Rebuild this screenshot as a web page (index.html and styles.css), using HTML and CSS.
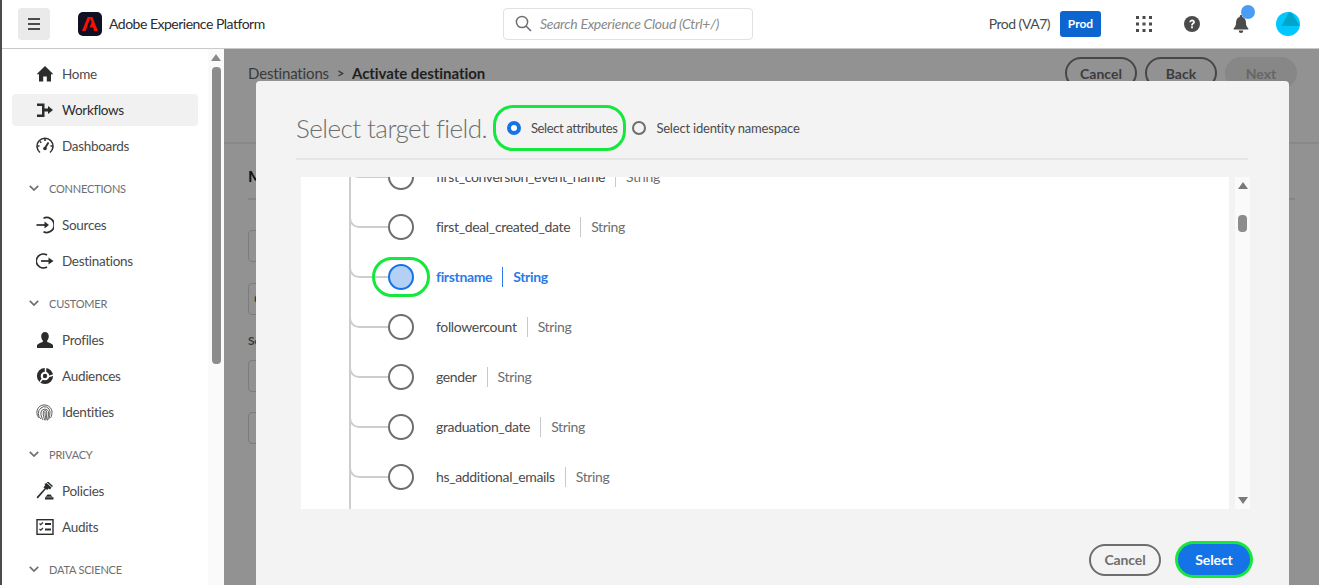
FILE: index.html
```html
<!DOCTYPE html>
<html lang="en">
<head>
<meta charset="utf-8">
<title>Adobe Experience Platform</title>
<link rel="stylesheet" href="styles.css">
</head>
<body>
<div class="app">
  <header class="topbar">
    <button class="menu-btn" aria-label="Menu">
      <svg width="14" height="12" viewBox="0 0 14 12"><path d="M1 1h12M1 6h12M1 11h12" stroke="#4b4b4b" stroke-width="1.8" fill="none"/></svg>
    </button>
    <span class="logo">
      <svg width="16" height="14" viewBox="0 0 16 14"><path fill="#fa0f00" d="M5.6 0h4.8L16 14h-3.7L11 10.4H7.6L9.7 5.2 8 1.6 3.6 14H0z"/></svg>
    </span>
    <span class="brand">Adobe Experience Platform</span>
    <div class="search">
      <svg width="17" height="17" viewBox="0 0 17 17"><circle cx="7" cy="7" r="5.6" fill="none" stroke="#6e6e6e" stroke-width="1.5"/><path d="M11 11l5 5" stroke="#6e6e6e" stroke-width="1.6"/></svg>
      <span>Search Experience Cloud (Ctrl+/)</span>
    </div>
    <div class="top-right">
      <span class="org">Prod (VA7)</span>
      <span class="badge">Prod</span>
      <svg class="grid-ico" width="16" height="16" viewBox="0 0 16 16" fill="#4b4b4b"><path d="M0 0h3v3H0zM6.5 0h3v3h-3zM13 0h3v3h-3zM0 6.5h3v3H0zM6.5 6.5h3v3h-3zM13 6.5h3v3h-3zM0 13h3v3H0zM6.5 13h3v3h-3zM13 13h3v3h-3z"/></svg>
      <svg class="help-ico" width="16" height="16" viewBox="0 0 16 16"><circle cx="8" cy="8" r="8" fill="#4b4b4b"/><path d="M5.400 6.200C5.500 4.700 6.600 3.600 8.100 3.600c1.500 0 2.800.9 2.800 2.400 0 1.200-.8 1.800-1.400 2.200-.5.300-.6.700-.6 1.200H7.100c0-1 .3-1.700 1-2.200.5-.3.9-.6.9-1.100 0-.5-.4-.8-1-.8-.6 0-1 .4-1.100 1z" fill="#fff"/><rect x="7.100" y="10.300" width="1.800" height="2" fill="#fff"/></svg>
      <span class="bell">
        <svg width="16" height="18" viewBox="0 0 16 18" fill="#4b4b4b"><path d="M8 0a1.3 1.3 0 0 1 1.3 1.3v.6C12 2.600 13 5 13 8c0 2.500.8 4 2.300 5.300V14.500H.7V13.300C2.200 12 3 10.500 3 8c0-3 1-5.400 3.700-6.100v-.6A1.300 1.300 0 0 1 8 0zM5.800 15.500h4.400A2.200 2.200 0 0 1 8 18a2.200 2.200 0 0 1-2.200-2.500z"/></svg>
        <i class="bell-dot"></i>
      </span>
      <svg class="avatar" width="24" height="24" viewBox="0 0 24 24"><circle cx="12" cy="12" r="12" fill="#00c8ff"/><path d="M15.500 .5 23.800 14H5.500L13 .3z" fill="#00a5c8"/></svg>
    </div>
  </header>

  <div class="body">
    <aside class="sidebar">
      <nav class="nav">
        <a class="item"><svg class="ico" viewBox="0 0 18 18"><path fill="#2c2c2c" d="M9 1 .6 9.200h2.400V16.500h4.200v-5h3.600v5H15V9.200h2.400z"/></svg>Home</a>
        <a class="item active"><svg class="ico" viewBox="0 0 18 18"><path fill="#2c2c2c" d="M1 2.500h7.500v5H12V5l5 4-5 4v-2.500H8.500V16H1v-2.500h5V5H1z"/></svg>Workflows</a>
        <a class="item"><svg class="ico" viewBox="0 0 18 18"><g fill="none" stroke="#2c2c2c" stroke-width="1.500"><path d="M4 15.500A8 8 0 1 1 14 15.500"/><path d="M9 11 12.500 5.500" stroke-width="1.800"/><path d="M9 2v2M3.500 9h-2M16.500 9h-2M4 4.500l1.300 1.300"/></g><circle cx="9" cy="11.500" r="1.800" fill="#2c2c2c"/></svg>Dashboards</a>

        <h3 class="section"><svg class="chev" viewBox="0 0 10 6"><path d="M.8.800 5 5l4.200-4.200" fill="none" stroke="#6e6e6e" stroke-width="1.700"/></svg>CONNECTIONS</h3>
        <a class="item"><svg class="ico" viewBox="0 0 18 18"><g fill="none" stroke="#2c2c2c" stroke-width="1.700"><path d="M7.500 2.200A7.500 7.500 0 1 1 7.500 15.800"/><path d="M.5 9h9"/></g><path d="M8.500 5.500 13 9l-4.500 3.500z" fill="#2c2c2c"/></svg>Sources</a>
        <a class="item"><svg class="ico" viewBox="0 0 18 18"><g fill="none" stroke="#2c2c2c" stroke-width="1.700"><path d="M11 3A7 7 0 1 0 11 15"/><path d="M5 9h8"/></g><path d="M12.500 5.500 17.500 9l-5 3.500z" fill="#2c2c2c"/></svg>Destinations</a>

        <h3 class="section"><svg class="chev" viewBox="0 0 10 6"><path d="M.8.800 5 5l4.200-4.200" fill="none" stroke="#6e6e6e" stroke-width="1.700"/></svg>CUSTOMER</h3>
        <a class="item"><svg class="ico" viewBox="0 0 18 18"><path fill="#2c2c2c" d="M9 1c2.300 0 3.800 1.700 3.800 4.200 0 1.800-.8 3.300-1.600 4.200v1.500c2 .7 5 1.800 5.800 3.100V17H1v-3c.8-1.300 3.800-2.400 5.800-3.100V9.400C6 8.500 5.200 7 5.200 5.200 5.200 2.700 6.700 1 9 1z"/></svg>Profiles</a>
        <a class="item"><svg class="ico" viewBox="0 0 18 18"><circle cx="9" cy="9" r="6.200" fill="none" stroke="#2c2c2c" stroke-width="3.800"/><path d="M9.500 0v5.500M12.500 9.500 18 8M4 15l2.800-3.500" stroke="#fff" stroke-width="1.500"/><circle cx="9" cy="9" r="2.200" fill="#2c2c2c"/></svg>Audiences</a>
        <a class="item"><svg class="ico" viewBox="0 0 18 18"><g fill="none" stroke="#4b4b4b" stroke-width=".9"><path d="M3 15A8 8 0 0 1 3.500 3.500 8 8 0 0 1 16 8c0 3-.3 5-1.500 7"/><path d="M5 16A7 7 0 0 1 5 5a5.500 5.500 0 0 1 9 3.500c0 3-.5 5.500-1.300 8"/><path d="M7 17c-1.500-3-2.500-5-2-8a4 4 0 0 1 7.500-.5c.2 3-.3 6-1.200 9"/><path d="M9 17.500C7.800 14.500 7 12 7.300 9a1.800 1.800 0 0 1 3.500 0c0 3-.3 5-1 8"/><path d="M9 8.800c0 3 .3 5 1 7.500"/></g></svg>Identities</a>

        <h3 class="section"><svg class="chev" viewBox="0 0 10 6"><path d="M.8.800 5 5l4.200-4.200" fill="none" stroke="#6e6e6e" stroke-width="1.700"/></svg>PRIVACY</h3>
        <a class="item"><svg class="ico" viewBox="0 0 18 18"><path fill="#2c2c2c" d="M10.500 0l1-1 5.500 5-1 1zM8.500 2l2-1 5 4.500-1.500 2-1.300-1-1.500 1.500-1.200-1.100L1.800 16.500.5 15.200 8.700 6.300 7.500 5.200 9.200 3.600zM9 15.200h8.500V17.500H9zM11.500 12.500h3l2 2.200h-7z"/></svg>Policies</a>
        <a class="item"><svg class="ico" viewBox="0 0 18 18"><rect x="1" y="1.700" width="16" height="14.600" fill="none" stroke="#2c2c2c" stroke-width="1.400"/><path d="M3.500 5.500l1.200 1.200L7 4.500M3.500 11l1.200 1.200L7 10" fill="none" stroke="#2c2c2c" stroke-width="1.200"/><path d="M9 6h6M9 11.500h6" stroke="#2c2c2c" stroke-width="1.800"/></svg>Audits</a>

        <h3 class="section"><svg class="chev" viewBox="0 0 10 6"><path d="M.8.800 5 5l4.200-4.200" fill="none" stroke="#6e6e6e" stroke-width="1.700"/></svg>DATA SCIENCE</h3>
      </nav>
      <div class="side-scroll">
        <svg class="sb-up" width="10" height="7" viewBox="0 0 10 7"><path d="M5 0l5 7H0z" fill="#8a8a8a"/></svg>
        <div class="sb-thumb"></div>
      </div>
    </aside>

    <main class="main">
      <div class="page">
        <div class="page-head">
          <div class="crumbs"><span>Destinations</span><b class="sep">&gt;</b><strong>Activate destination</strong></div>
          <div class="page-actions">
            <span class="pg-btn">Cancel</span>
            <span class="pg-btn">Back</span>
            <span class="pg-btn off">Next</span>
          </div>
        </div>
        <div class="page-body">
          <h2 class="pg-title">Mapping</h2>
          <div class="pg-field"></div>
          <div class="pg-field second"><span>Cancel</span></div>
          <div class="pg-label">Source field</div>
          <div class="pg-field"></div>
          <div class="pg-field third"></div>
        </div>
      </div>

      <section class="modal">
        <div class="modal-head">
          <h1 class="modal-title">Select target field.</h1>
          <div class="radios">
            <label class="radio on"><i class="dot"></i>Select attributes</label>
            <label class="radio"><i class="dot"></i>Select identity namespace</label>
          </div>
        </div>
        <div class="picker">
          <div class="tree-panel">
            <ul class="tree">
              <li class="row"><i class="elbow"></i><i class="node"></i><span class="name">first_conversion_event_name</span><span class="type">String</span></li>
              <li class="row"><i class="elbow"></i><i class="node"></i><span class="name">first_deal_created_date</span><span class="type">String</span></li>
              <li class="row sel"><i class="elbow"></i><i class="node"></i><span class="name">firstname</span><span class="type">String</span></li>
              <li class="row"><i class="elbow"></i><i class="node"></i><span class="name">followercount</span><span class="type">String</span></li>
              <li class="row"><i class="elbow"></i><i class="node"></i><span class="name">gender</span><span class="type">String</span></li>
              <li class="row"><i class="elbow"></i><i class="node"></i><span class="name">graduation_date</span><span class="type">String</span></li>
              <li class="row"><i class="elbow"></i><i class="node"></i><span class="name">hs_additional_emails</span><span class="type">String</span></li>
            </ul>
          </div>
          <div class="tree-scroll">
            <svg width="10" height="7" viewBox="0 0 10 7"><path d="M5 0l5 7H0z" fill="#7a7a7a"/></svg>
            <div class="ts-thumb"></div>
            <svg class="ts-down" width="10" height="7" viewBox="0 0 10 7"><path d="M5 7 0 0h10z" fill="#7a7a7a"/></svg>
          </div>
        </div>
        <div class="modal-foot">
          <button class="btn ghost">Cancel</button>
          <button class="btn cta">Select</button>
        </div>
      </section>
    </main>
  </div>
</div>
</body>
</html>
```
FILE: styles.css
```css
* { box-sizing: border-box; }
html, body { margin: 0; height: 100%; overflow: hidden; }
body { font-family: "Lato", "Open Sans", sans-serif; font-size: 14px; color: #2c2c2c; background: #fff; }
h1, h2, h3, ul { margin: 0; padding: 0; }
ul { list-style: none; }
i { display: block; font-style: normal; }
button { font-family: inherit; }

.app { height: 585px; display: flex; flex-direction: column; border-left: 2px solid #4b4b4b; }

/* top bar */
.topbar { height: 49px; flex: none; display: flex; align-items: center; padding: 0 19px 1px 16px; border-bottom: 1px solid #c9c9c9; background: #fff; }
.menu-btn { width: 32px; height: 32px; border: 0; border-radius: 4px; background: #eaeaea; display: flex; align-items: center; justify-content: center; padding: 0; }
.logo { width: 24px; height: 24px; margin-left: 28px; border-radius: 5px; background: #101025; display: flex; align-items: center; justify-content: center; }
.brand { margin-left: 7px; font-size: 14px; letter-spacing: -.5px; color: #2c2c2c; white-space: nowrap; width: 394px; }
.search { width: 250px; height: 32px; border: 1px solid #e1e1e1; border-radius: 4px; display: flex; align-items: center; gap: 8px; padding-left: 11px; font-style: italic; font-size: 14px; letter-spacing: -.3px; color: #8a8a8a; white-space: nowrap; }
.top-right { margin-left: auto; display: flex; align-items: center; }
.org { font-size: 14px; letter-spacing: -.5px; color: #4b4b4b; white-space: nowrap; }
.badge { margin-left: 10px; width: 41px; height: 26px; border-radius: 3px; background: #0d66d0; color: #fff; font-size: 12px; font-weight: 700; display: flex; align-items: center; justify-content: center; }
.grid-ico { margin-left: 35px; }
.help-ico { margin-left: 32px; }
.bell { margin-left: 33px; width: 16px; height: 18px; position: relative; display: block; }
.bell svg { display: block; }
.bell-dot { position: absolute; top: -10px; left: 8px; width: 14px; height: 14px; border-radius: 50%; background: #4b9cf5; }
.avatar { margin-left: 27px; }

.body { flex: 1; min-height: 0; display: flex; }

/* sidebar */
.sidebar { width: 222px; flex: none; display: flex; background: #fff; overflow: hidden; }
.nav { flex: 1; padding: 7px 10px 0; display: flex; flex-direction: column; }
.item { height: 32px; flex: none; margin: 2px 0; padding-left: 24px; border-radius: 4px; display: flex; align-items: center; gap: 8px; font-size: 13.500px; letter-spacing: -.3px; color: #4b4b4b; white-space: nowrap; }
.item.active { background: #f1f1f1; color: #2c2c2c; }
.ico { width: 18px; height: 18px; flex: none; }
.section { height: 36px; flex: none; margin-top: 7px; padding: 0 0 2px 17px; display: flex; align-items: center; gap: 10px; font-size: 11px; font-weight: 400; letter-spacing: -.2px; color: #6e6e6e; white-space: nowrap; }
.chev { width: 10px; height: 6px; flex: none; }
.side-scroll { width: 16px; flex: none; background: #fafafa; display: flex; flex-direction: column; align-items: center; padding-top: 5px; }
.sb-thumb { width: 9px; height: 297px; margin-top: 6px; border-radius: 4px; background: #8c8c8c; }

/* main (dimmed page under the dialog) */
.main { flex: 1; min-width: 0; position: relative; overflow: hidden; background: #929292; }
.page { height: 100%; }
.page-head { height: 95px; padding: 8px 22px 0 24px; border-bottom: 2px solid #888; display: flex; justify-content: space-between; align-items: flex-start; }
.crumbs { display: flex; align-items: center; height: 32px; font-size: 15px; color: #3a3a3a; white-space: nowrap; }
.crumbs span { letter-spacing: -.15px; }
.crumbs .sep { font-size: 13px; font-weight: 700; margin: 0 7px 0 8px; width: 8px; }
.crumbs strong { color: #1f1f1f; font-weight: 700; letter-spacing: -.05px; }
.page-actions { display: flex; gap: 8px; }
.pg-btn { width: 72px; height: 32px; border: 2px solid #464646; border-radius: 16px; display: flex; align-items: center; justify-content: center; font-size: 14px; font-weight: 700; color: #3c3c3c; }
.pg-btn.off { border-color: #878787; background: #878787; color: #666; }
.page-body { padding: 18px 24px 0; }
.pg-title { font-size: 16px; font-weight: 700; color: #141414; height: 38px; padding-top: 4px; border-bottom: 2px solid #858585; }
.pg-field { width: 300px; height: 32px; margin-top: 30px; border: 1px solid #7c7c7c; border-radius: 4px; }
.pg-field.second { margin-top: 21px; padding-left: 5px; color: #333; line-height: 30px; }
.pg-label { margin-top: 18px; height: 16px; font-size: 12px; font-weight: 700; color: #3a3a3a; }
.pg-label + .pg-field { margin-top: 11px; }
.pg-field.third { margin-top: 20px; }

/* dialog */
.modal { position: absolute; left: 32px; top: 32px; width: 1033px; height: 560px; border-radius: 4px 4px 0 0; background: #f3f3f3; padding: 0 41px 0 40px; display: flex; flex-direction: column; }
.modal-head { height: 79px; flex: none; display: flex; align-items: center; border-bottom: 2px solid #e5e5e5; padding-top: 16px; }
.modal-title { font-size: 26px; font-weight: 300; color: #6e6e6e; white-space: nowrap; letter-spacing: -.55px; }
.radios { display: flex; align-items: center; margin-left: 20px; }
.radio { display: flex; align-items: center; gap: 10px; font-size: 13px; letter-spacing: -.4px; color: #4b4b4b; white-space: nowrap; position: relative; }
.radio + .radio { margin-left: 15px; letter-spacing: -.2px; }
.dot { width: 14px; height: 14px; margin-top: 1px; border: 2px solid #6e6e6e; border-radius: 50%; background: #f3f3f3; flex: none; }
.radio.on .dot { border: 4.500px solid #1473e6; background: #fff; }
.radio.on::after { content: ""; position: absolute; left: -14px; right: -9px; top: -14px; bottom: -14px; height: 40px; margin: auto 0; border: 3px solid #14e83c; border-radius: 20px; }

.picker { flex: none; margin: 17px 0 0 5px; height: 332px; display: flex; align-items: stretch; }
.tree-panel { width: 928px; flex: none; background: #fff; overflow: hidden; padding-left: 48px; }
.tree { margin-top: -25px; border-left: 2px solid #cdcdcd; height: 357px; }
.row { height: 50px; display: flex; align-items: center; font-size: 14px; letter-spacing: -.35px; color: #4b4b4b; white-space: nowrap; }
.elbow { width: 39px; height: 26px; align-self: flex-start; border-left: 2px solid #cdcdcd; border-bottom: 2px solid #cdcdcd; border-bottom-left-radius: 10px; margin-left: -2px; flex: none; }
.node { width: 26px; height: 26px; border: 2px solid #6e6e6e; border-radius: 50%; background: #fff; flex: none; margin-right: 22px; position: relative; }
.name { padding-right: 10px; margin-bottom: 1px; }
.type { padding-left: 10px; border-left: 1px solid #c9c9c9; line-height: 20px; color: #6e6e6e; }
.row.sel .name, .row.sel .type { color: #2a7be8; font-weight: 700; }
.row.sel .type { border-left-color: #2a7be8; }
.row.sel .node { border-color: #1473e6; background: #b3d0f5; }
.row.sel .node::after { content: ""; position: absolute; left: -18px; right: -18px; top: -9px; bottom: -9px; border: 3px solid #14e83c; border-radius: 20px; }

.tree-scroll { width: 15px; flex: none; margin-left: 6px; background: #fafafa; display: flex; flex-direction: column; align-items: center; padding: 5px 0; }
.ts-thumb { width: 9px; height: 17px; margin-top: 26px; border-radius: 4px; background: #8c8c8c; }
.ts-down { margin-top: auto; }

.modal-foot { flex: none; display: flex; justify-content: flex-end; align-items: flex-start; gap: 17px; padding: 35px 0 0; margin-right: -2px; }
.btn { width: 72px; height: 32px; border-radius: 16px; font-size: 14px; font-weight: 700; padding: 0 0 1px; letter-spacing: -.1px; display: flex; align-items: center; justify-content: center; }
.btn.ghost { border: 2px solid #6e6e6e; background: #f3f3f3; color: #6e6e6e; }
.btn.cta { height: 31px; border: 0; background: #1473e6; color: #fff; box-shadow: 0 0 0 3px #14e83c; }
```
